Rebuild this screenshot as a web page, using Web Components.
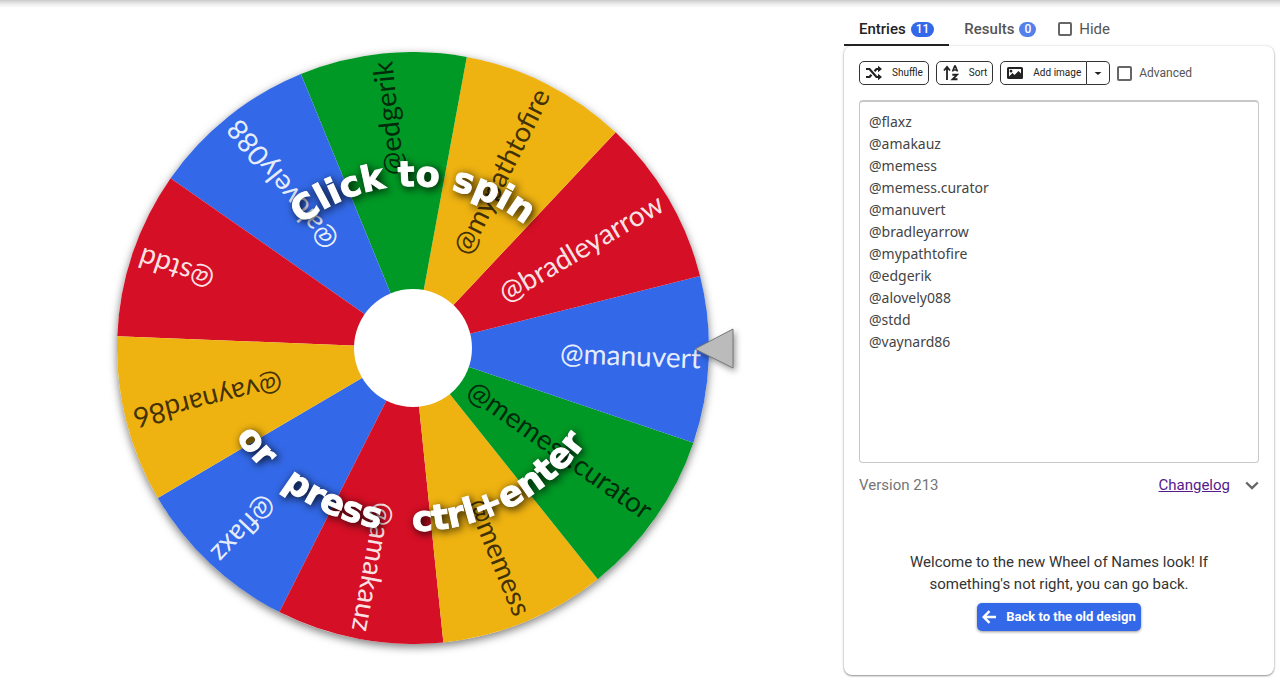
<!DOCTYPE html>
<html lang="en">
<head>
<meta charset="utf-8">
<meta name="viewport" content="width=device-width, initial-scale=1">
<title>Wheel of Names</title>
<style>
  body { margin: 0; background: #fff; color: #333; font: 15px/22px Roboto, "Liberation Sans", sans-serif; }
</style>
</head>
<body>
<wheel-app></wheel-app>

<template id="app-tpl">
  <style>
    :host { display: block; }
    header { height: 8px; background: linear-gradient(#cacaca, #ececec 50%, #fff); }
    main { display: grid; grid-template-columns: minmax(0, 1fr) 430px; column-gap: 16px; padding-right: 6px; align-items: start; }
    .side { min-width: 0; }
    nav { display: flex; align-items: stretch; height: 38px; }
    nav check-box { align-self: center; margin: 4px 0 0 7px; }
    .tools { display: flex; align-items: center; gap: 7px; }
    .split { display: flex; }
    .info { display: flex; align-items: center; height: 22px; margin-top: 11px; color: #757575; }
    .info a { margin-left: auto; color: #551a8b; }
    .info button { all: unset; display: block; width: 14px; height: 14px; margin-left: 15px; color: #666; cursor: pointer; }
    .info svg { display: block; width: 14px; height: 14px; }
    .welcome { margin: 55px auto 0; width: 310px; text-align: center; }
    .welcome p { margin: 0 0 8px; }
    @media (max-width: 860px) { main { grid-template-columns: minmax(0, 1fr); padding-left: 6px; } }
  </style>
  <header></header>
  <main>
    <name-wheel></name-wheel>
    <section class="side">
      <nav role="tablist">
        <tab-button selected count="11">Entries</tab-button>
        <tab-button count="0">Results</tab-button>
        <check-box label="Hide"></check-box>
      </nav>
      <entry-card>
        <div class="tools">
          <tool-button>
            <svg slot="icon" viewBox="0 0 16 16" fill="none" stroke="currentColor" stroke-width="2.200"><path d="M0 4h3.500l7 8H13M0 12h3.500l2-2.300M8.500 6.300l2-2.300H13"/><path d="M12 .8 16 4l-4 3.200zM12 8.800 16 12l-4 3.200z" fill="currentColor" stroke="none"/></svg>
            Shuffle
          </tool-button>
          <tool-button>
            <svg slot="icon" viewBox="0 0 16 16" fill="none" stroke="currentColor"><path d="M4 15V2.500M1 5.500l3-3.500 3 3.500" stroke-width="1.800"/><path d="M9.500 6.500 11.700 1h.6l2.200 5.500M10.300 5h3.400" stroke-width="1.600"/><path d="M9.300 9.800h4.700l-4.400 4.500h4.900" stroke-width="1.900"/></svg>
            Sort
          </tool-button>
          <div class="split">
            <tool-button part-of="start">
              <svg slot="icon" viewBox="0 0 16 16"><path fill="currentColor" fill-rule="evenodd" d="M1.500 2h13A1.500 1.500 0 0 1 16 3.500v9a1.500 1.500 0 0 1-1.500 1.500h-13A1.500 1.500 0 0 1 0 12.500v-9A1.500 1.500 0 0 1 1.500 2zM2 11.500 5.500 8l2 2L11.500 6 14 8.500V4H2zM4 4.800a1.400 1.400 0 1 1 0 2.800 1.400 1.400 0 0 1 0-2.800z"/></svg>
              Add image
            </tool-button>
            <tool-button part-of="end" name="Image options">
              <svg slot="icon" viewBox="0 0 16 16"><path fill="currentColor" d="M4.500 7h7L8 10z"/></svg>
            </tool-button>
          </div>
          <check-box label="Advanced" small></check-box>
        </div>
        <entry-list></entry-list>
        <div class="info">
          <span>Version 213</span>
          <a href="#changelog">Changelog</a>
          <button aria-label="Expand"><svg viewBox="0 0 14 14" fill="none" stroke="currentColor" stroke-width="2.400"><path d="M1.200 4.500 7 10l5.800-5.500"/></svg></button>
        </div>
        <div class="welcome">
          <p>Welcome to the new Wheel of Names look! If something's not right, you can go back.</p>
          <back-button>Back to the old design</back-button>
        </div>
      </entry-card>
    </section>
  </main>
</template>

<template id="tab-tpl">
  <style>
    :host { display: block; }
    button { all: unset; box-sizing: border-box; display: flex; align-items: center; gap: 5px; height: 100%; padding: 6px 15px 0; border-bottom: 2px solid transparent; color: #555; font-weight: 500; cursor: pointer; }
    :host([selected]) button { border-color: #222; color: #222; }
    .badge { padding: 0 5px; border-radius: 8px; background: #3369e8; color: #fff; font-size: 12px; line-height: 15px; font-weight: 500; }
    :host(:not([selected])) .badge { background: #5480ec; }
  </style>
  <button role="tab"><slot></slot><span class="badge"></span></button>
</template>

<template id="check-tpl">
  <style>
    :host { display: block; }
    label { display: flex; align-items: center; gap: 7px; color: #555; }
    input { appearance: none; box-sizing: border-box; width: 14px; height: 14px; margin: 0; border: 2px solid #666; border-radius: 2px; }
    :host([small]) label { font-size: 12px; }
    :host([small]) input { width: 15px; height: 15px; }
  </style>
  <label><input type="checkbox"><span></span></label>
</template>

<template id="tool-tpl">
  <style>
    :host { display: block; }
    button { all: unset; box-sizing: border-box; display: flex; align-items: center; gap: 10px; height: 24px; padding: 0 5px 0 6px; border: 1px solid #333; border-radius: 5px; color: #222; font-size: 10px; font-weight: 400; white-space: nowrap; cursor: pointer; }
    :host([part-of="start"]) button { border-radius: 5px 0 0 5px; }
    :host([part-of="end"]) button { padding: 0 3px; gap: 0; border-left: 0; border-radius: 0 5px 5px 0; }
    ::slotted(svg) { display: block; width: 16px; height: 16px; flex: none; }
  </style>
  <button><slot name="icon"></slot><span><slot></slot></span></button>
</template>

<template id="card-tpl">
  <style>
    :host { display: block; box-sizing: border-box; min-height: 629px; padding: 15px; border-radius: 8px; background: #fff; box-shadow: 0 1px 2px rgba(0,0,0,.4), 0 0 3px rgba(0,0,0,.14); }
  </style>
  <slot></slot>
</template>

<template id="list-tpl">
  <style>
    :host { display: block; margin-top: 15px; }
    textarea { display: block; box-sizing: border-box; width: 100%; height: 363px; margin: 0; padding: 9px; resize: none; border: 1px solid #c8c8c8; border-top: 2px solid #c8c8c8; border-radius: 4px; color: #444; font: 14px/22px "Noto Sans", "Open Sans", sans-serif; outline: 0; overflow: auto; }
  </style>
  <textarea aria-label="Entries" spellcheck="false"></textarea>
</template>

<template id="back-tpl">
  <style>
    :host { display: block; }
    button { all: unset; display: inline-flex; align-items: center; gap: 10px; height: 28px; padding: 0 5px; border-radius: 5px; background: #3369e8; color: #fff; font-size: 13px; font-weight: 700; box-shadow: 0 1px 3px rgba(0,0,0,.4); cursor: pointer; }
    svg { width: 14px; height: 14px; }
  </style>
  <button><svg viewBox="0 0 14 14" fill="none" stroke="currentColor" stroke-width="2.400"><path d="M14 7H1.800M7.500 1.200 1.700 7l5.800 5.800"/></svg><span><slot></slot></span></button>
</template>

<template id="wheel-tpl">
  <style>
    :host { display: block; min-width: 0; cursor: pointer; }
    svg { display: block; width: 100%; max-height: 100vh; }
    .disc { filter: drop-shadow(0 3px 4px rgba(0,0,0,.5)); }
    .name { font: 28px Lato, sans-serif; text-anchor: end; }
    .hint { font: bold 35px "DejaVu Sans", sans-serif; fill: #fff; stroke: #fff; stroke-width: 1; text-anchor: middle; filter: drop-shadow(2px 2px 4px rgba(0,0,0,.9)); }
    .pointer { fill: #bbb; stroke: #777; filter: drop-shadow(2px 3px 3px rgba(0,0,0,.4)); }
  </style>
  <svg viewBox="-413 -340 828 676" role="img" aria-label="Wheel">
    <defs>
      <path id="upper" d="M-181 19A181 181 0 0 1 181 19"/>
      <path id="lower" d="M-214 -31A214 214 0 0 0 214 -31"/>
    </defs>
    <g class="disc"><circle r="296" fill="#fff"/><g class="slices"></g></g>
    <g class="names"></g>
    <circle r="59" fill="#fff"/>
    <path class="pointer" d="M282 1 320-19V20z"/>
    <text class="hint"><textPath href="#upper" startOffset="37%">Click</textPath> <textPath href="#upper" startOffset="51%">to</textPath> <textPath href="#upper" startOffset="64%">spin</textPath></text>
    <text class="hint"><textPath href="#lower" startOffset="22%">or</textPath> <textPath href="#lower" startOffset="37%">press</textPath> <textPath href="#lower" startOffset="65%">ctrl+enter</textPath></text>
  </svg>
</template>

<script>
  const ENTRIES = ["@flaxz", "@amakauz", "@memess", "@memess.curator", "@manuvert", "@bradleyarrow", "@mypathtofire", "@edgerik", "@alovely088", "@stdd", "@vaynard86"];
  const COLORS = [
    { fill: "#3369e8", text: "rgba(255,255,255,.9)" },
    { fill: "#d50f25", text: "rgba(255,255,255,.9)" },
    { fill: "#eeb211", text: "rgba(0,0,0,.74)" },
    { fill: "#009925", text: "rgba(0,0,0,.74)" }
  ];

  class Base extends HTMLElement {
    constructor() {
      super();
      this.attachShadow({ mode: "open" }).append(document.getElementById(this.constructor.tpl).content.cloneNode(true));
    }
    $(selector) { return this.shadowRoot.querySelector(selector); }
  }

  class TabButton extends Base {
    static tpl = "tab-tpl";
    connectedCallback() {
      this.$(".badge").textContent = this.getAttribute("count");
      this.$("button").setAttribute("aria-selected", this.hasAttribute("selected"));
    }
  }
  class CheckBox extends Base {
    static tpl = "check-tpl";
    connectedCallback() { this.$("span").textContent = this.getAttribute("label"); }
  }
  class ToolButton extends Base {
    static tpl = "tool-tpl";
    connectedCallback() {
      if (this.hasAttribute("name")) this.$("button").setAttribute("aria-label", this.getAttribute("name"));
    }
  }
  class EntryCard extends Base { static tpl = "card-tpl"; }
  class BackButton extends Base { static tpl = "back-tpl"; }
  class EntryList extends Base {
    static tpl = "list-tpl";
    connectedCallback() { this.$("textarea").textContent = ENTRIES.join("\n"); }
  }
  class NameWheel extends Base {
    static tpl = "wheel-tpl";
    connectedCallback() {
      const NS = "http://www.w3.org/2000/svg";
      const radius = 296, step = 360 / ENTRIES.length, spin = 133.2;
      const point = deg => [radius * Math.cos(deg * Math.PI / 180), radius * Math.sin(deg * Math.PI / 180)].join(" ");
      ENTRIES.forEach((name, i) => {
        // Entries run counter-clockwise, cycling through the four colours.
        const angle = spin - i * step;
        const color = COLORS[i % COLORS.length];
        const slice = document.createElementNS(NS, "path");
        slice.setAttribute("d", `M0 0L${point(angle - step / 2)}A${radius} ${radius} 0 0 1 ${point(angle + step / 2)}z`);
        slice.setAttribute("fill", color.fill);
        this.$(".slices").append(slice);
        const text = document.createElementNS(NS, "text");
        text.setAttribute("class", "name");
        text.setAttribute("x", 288);
        text.setAttribute("y", 9);
        text.setAttribute("transform", `rotate(${angle})`);
        text.setAttribute("fill", color.text);
        text.textContent = name;
        this.$(".names").append(text);
      });
    }
  }
  class WheelApp extends Base { static tpl = "app-tpl"; }

  customElements.define("tab-button", TabButton);
  customElements.define("check-box", CheckBox);
  customElements.define("tool-button", ToolButton);
  customElements.define("entry-card", EntryCard);
  customElements.define("back-button", BackButton);
  customElements.define("entry-list", EntryList);
  customElements.define("name-wheel", NameWheel);
  customElements.define("wheel-app", WheelApp);
</script>
</body>
</html>
